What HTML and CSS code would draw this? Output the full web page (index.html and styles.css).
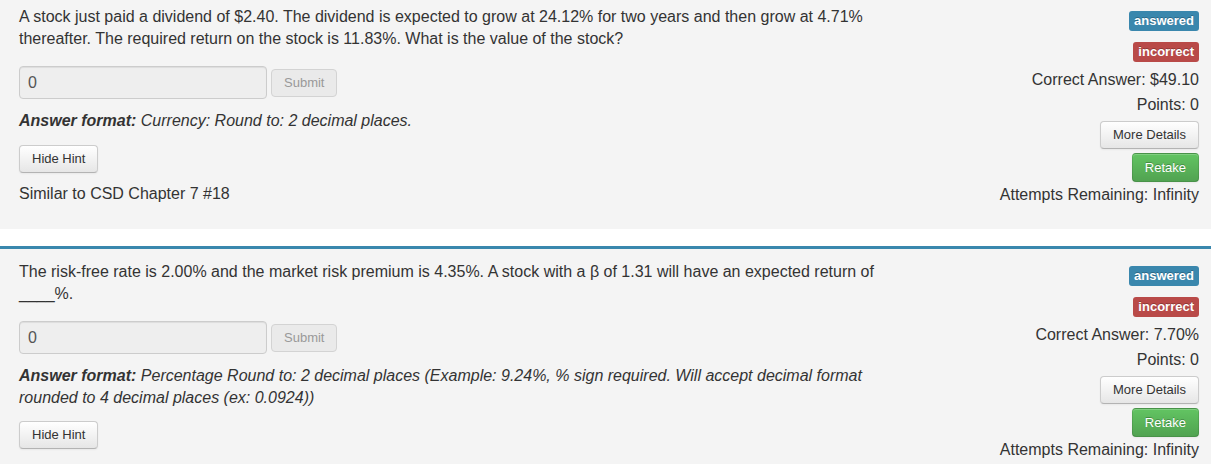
FILE: index.html
```html
<!DOCTYPE html>
<html lang="en">
<head>
<meta charset="utf-8">
<title>Questions</title>
<link rel="stylesheet" href="styles.css">
</head>
<body>
<div class="page">
  <div class="question first">
    <div class="main">
      <p class="prompt">A stock just paid a dividend of $2.40. The dividend is expected to grow at 24.12% for two years and then grow at 4.71% thereafter. The required return on the stock is 11.83%. What is the value of the stock?</p>
      <div class="answer-row">
        <input class="answer-input" type="text" value="0" disabled>
        <button class="btn btn-disabled" disabled>Submit</button>
      </div>
      <p class="format"><b>Answer format:</b> Currency: Round to: 2 decimal places.</p>
      <button class="btn hint">Hide Hint</button>
      <p class="similar">Similar to CSD Chapter 7 #18</p>
    </div>
    <div class="status">
      <span class="label label-info">answered</span>
      <span class="label label-important">incorrect</span>
      <div class="correct">Correct Answer: $49.10</div>
      <div class="points">Points: 0</div>
      <button class="btn details">More Details</button>
      <button class="btn btn-success retake">Retake</button>
      <div class="attempts">Attempts Remaining: Infinity</div>
    </div>
  </div>

  <div class="question">
    <div class="main">
      <p class="prompt">The risk-free rate is 2.00% and the market risk premium is 4.35%. A stock with a β of 1.31 will have an expected return of ____%.</p>
      <div class="answer-row">
        <input class="answer-input" type="text" value="0" disabled>
        <button class="btn btn-disabled" disabled>Submit</button>
      </div>
      <p class="format"><b>Answer format:</b> Percentage Round to: 2 decimal places (Example: 9.24%, % sign required. Will accept decimal format rounded to 4 decimal places (ex: 0.0924))</p>
      <button class="btn hint">Hide Hint</button>
    </div>
    <div class="status">
      <span class="label label-info">answered</span>
      <span class="label label-important">incorrect</span>
      <div class="correct">Correct Answer: 7.70%</div>
      <div class="points">Points: 0</div>
      <button class="btn details">More Details</button>
      <button class="btn btn-success retake">Retake</button>
      <div class="attempts">Attempts Remaining: Infinity</div>
    </div>
  </div>
</div>
</body>
</html>
```
FILE: styles.css
```css
html, body {
  margin: 0;
  padding: 0;
  background: #ffffff;
}
body {
  font-family: "Liberation Sans", Arial, sans-serif;
  font-size: 16px;
  color: #333333;
  overflow: hidden;
}
.page {
  width: 1211px;
}
.question {
  display: flex;
  justify-content: space-between;
  align-items: flex-start;
  background: #f4f4f4;
  border-top: 3px solid #3a87ad;
  padding: 12px 12px 23px 19px;
  margin-bottom: 17px;
}
.question.first {
  margin-top: -9px;
}
.main {
  width: 880px;
}
.prompt {
  margin: 0;
  line-height: 21.5px;
}
.answer-row {
  display: flex;
  align-items: center;
  gap: 4px;
  margin-top: 17px;
}
.answer-input {
  box-sizing: border-box;
  width: 248px;
  height: 33px;
  margin: 0;
  padding: 0 8px;
  background: #eeeeee;
  border: 1px solid #cccccc;
  border-radius: 4px;
  font-family: "Liberation Sans", Arial, sans-serif;
  font-size: 16px;
  color: #555555;
  box-shadow: inset 0 1px 1px rgba(0,0,0,0.075);
}
.btn {
  box-sizing: border-box;
  display: inline-block;
  margin: 0;
  padding: 4px 12px;
  font-family: "Liberation Sans", Arial, sans-serif;
  font-size: 13px;
  line-height: 18px;
  color: #333333;
  text-align: center;
  background-color: #f5f5f5;
  background-image: linear-gradient(to bottom, #ffffff, #e6e6e6);
  border: 1px solid #cccccc;
  border-bottom-color: #b3b3b3;
  border-radius: 4px;
  box-shadow: inset 0 1px 0 rgba(255,255,255,0.2), 0 1px 2px rgba(0,0,0,0.05);
  cursor: pointer;
}
.btn-disabled {
  height: 28px;
  color: #999999;
  background-image: none;
  background-color: #eaeaea;
  border-color: #d3d3d3;
  box-shadow: none;
}
.format {
  margin: 11px 0 0 0;
  font-style: italic;
  line-height: 21.5px;
}
.format b {
  font-weight: bold;
}
.hint {
  margin-top: 13px;
  height: 28px;
}
.similar {
  margin: 10px 0 0 0;
  line-height: 21.5px;
}
.status {
  display: flex;
  flex-direction: column;
  align-items: flex-end;
  margin-top: 5px;
}
.label {
  display: inline-block;
  padding: 3px 5px;
  font-size: 13px;
  font-weight: bold;
  line-height: 14px;
  color: #ffffff;
  border-radius: 3px;
  text-shadow: 0 -1px 0 rgba(0,0,0,0.25);
}
.label-info {
  background: #3a87ad;
}
.label-important {
  background: #b94a48;
  margin-top: 11px;
}
.correct {
  margin-top: 7px;
  line-height: 22px;
}
.points {
  margin-top: 3px;
  line-height: 22px;
}
.details {
  margin-top: 5px;
  height: 28px;
}
.btn-success {
  margin-top: 4px;
  height: 29px;
  color: #ffffff;
  text-shadow: 0 -1px 0 rgba(0,0,0,0.25);
  background-color: #5bb75b;
  background-image: linear-gradient(to bottom, #62c462, #51a351);
  border-color: rgba(0,0,0,0.1) rgba(0,0,0,0.1) rgba(0,0,0,0.25);
}
.attempts {
  margin-top: 2px;
  line-height: 22px;
}
```
